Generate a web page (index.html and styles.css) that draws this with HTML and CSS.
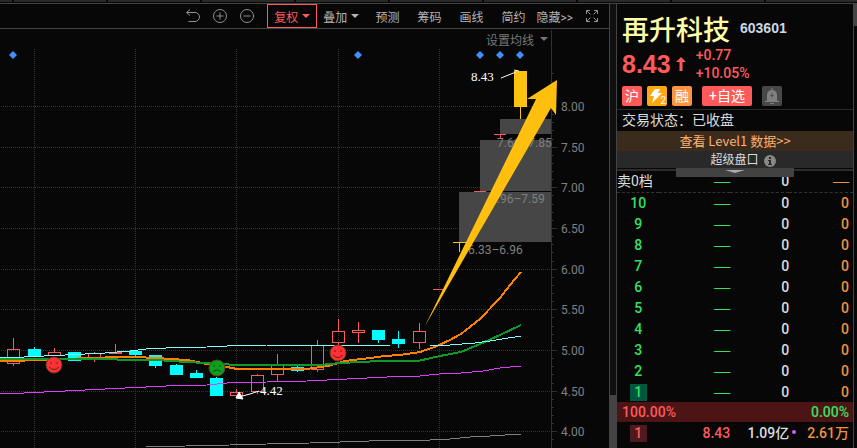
FILE: index.html
```html
<!DOCTYPE html>
<html lang="zh-CN">
  <head>
    <meta charset="UTF-8" />
    <meta name="viewport" content="width=device-width, initial-scale=1.0" />
    <title>再升科技 603601</title>
    <link rel="stylesheet" href="styles.css">
  </head>
  <body>
    <div class="tabs">
      <span></span><span></span><span></span><span></span><span></span>
      <span></span><span></span><span></span><span></span><span></span>
    </div>

    <div class="layout">
      <main class="chart">
        <nav class="toolbar">
          <button class="icon" aria-label="撤销">
            <svg width="16" height="16" viewBox="0 0 16 16"><path d="M5 1.500 1.500 4.500 5 7.500M2 4.500h8a4.500 4.500 0 0 1 0 9H3.500" /></svg>
          </button>
          <button class="icon" aria-label="放大">
            <svg width="16" height="16" viewBox="0 0 16 16"><circle cx="8" cy="8" r="6.500" /><path d="M4.500 8h7M8 4.500v7" /></svg>
          </button>
          <button class="icon" aria-label="缩小">
            <svg width="16" height="16" viewBox="0 0 16 16"><circle cx="8" cy="8" r="6.500" /><path d="M4.500 8h7" /></svg>
          </button>
          <button class="active">复权<i class="caret"></i></button>
          <button class="drop">叠加<i class="caret"></i></button>
          <button>预测</button>
          <button>筹码</button>
          <button>画线</button>
          <button>简约</button>
          <button class="hide">隐藏&gt;&gt;</button>
          <button class="icon full" aria-label="全屏">
            <svg width="12" height="12" viewBox="0 0 12 12"><path d="M.5 4V.5H4M.5.5 4.500 4.500M8 .5h3.500V4M11.500.5l-4 4M.5 8v3.500H4M.5 11.500l4-4M8 11.500h3.500V8M11.500 11.500l-4-4" /></svg>
          </button>
        </nav>

        <div class="plot">
          <button class="ma-setting">设置均线<i class="caret"></i></button>
          <svg class="kline" viewBox="0 29 609 419">
            <!-- grille -->
            <path class="grid" d="M34.500 49V448M135.500 49V448M236.500 49V448M338.500 49V448M439.500 49V448" />
            <g id="axis"></g>
            <path class="axis" d="M551.500 30V448" />

            <g class="gap">
              <rect x="500" y="119" width="51" height="15" />
              <rect x="480" y="140" width="71" height="51" />
              <rect x="459" y="192" width="92" height="50" />
            </g>
            <g class="gap-text">
              <text x="497" y="147">7.66–7.85</text>
              <text x="490" y="203">6.96–7.59</text>
              <text x="468" y="254">6.33–6.96</text>
            </g>

            <g id="candles"></g>

            <g class="limit">
              <path d="M453 242.500h13M459.500 242v10M520.500 106v13" />
              <rect x="514" y="71" width="13" height="36" />
            </g>
            <path class="up" d="M433 289.500h12M474 191.500h12M494 134.500h12M500.500 134v4" />

            <polyline class="ma ma-gray" points="146,447 186,446 230,445 267,444 310,443 340,442 369,441 390,440 430,440 450,439 470,437 490,436 521,434" />
            <polyline class="ma ma-purple" points="0,394 24,393 65,391 105,389 146,387 166,386 207,385 227,383 267,382 307,381 347,379 387,377 420,376 439,374 461,373 483,371 500,368 521,366" />
            <polyline class="ma ma-orange" points="0,361 15,361 35,360 60,359 95,358 115,357 135,357 156,358 187,360 207,364 227,367 237,369 306,369 328,366 345,361 370,358 385,356 400,355 420,352 437,346 450,340 461,334 480,319 500,298 510,285 521,272" />
            <polyline class="ma ma-green" points="0,359 115,359 120,360 156,360 187,362 205,363 237,365 320,365 340,363 380,361 418,361 440,356 461,352 480,344 500,335 521,325" />
            <polyline class="ma ma-cyan" points="0,358 24,357 44,356 65,355 85,354 105,353 130,351 146,349 166,348 207,347 227,346 267,345 340,345 390,346 430,346 450,345 475,343 490,341 502,339 521,336" />

            <g class="face happy">
              <circle cx="54" cy="365" r="8" />
              <path d="M51 362v2M57 362v2M49 367q5 5 10 0" />
              <circle cx="338" cy="353" r="8" />
              <path d="M335 350v2M341 350v2M333 355q5 5 10 0" />
            </g>
            <g class="face sad">
              <circle cx="217" cy="368" r="8" />
              <path d="M214 365v2M220 365v2M213 372q4 -4 8 0" />
            </g>

            <path class="signal" d="M13 51l4 4-4 4-4-4zM358 51l4 4-4 4-4-4zM480 51l4 4-4 4-4-4zM500 51l4 4-4 4-4-4zM520 51l4 4-4 4-4-4z" />

            <g class="mark">
              <text x="471" y="81">8.43</text>
              <path d="M501 78l15-6M514 70l5 1M239 397l11-3 9-3" />
              <path class="head" d="M236 398l3-6 4 7z" />
              <text x="260" y="395">4.42</text>
            </g>

            <path class="arrow" d="M423 327 425 326 536 99 527 99 557 80 556 115 551 108 425 326z" />
          </svg>
        </div>
      </main>

      <div class="scrollbar"><i></i></div>

      <aside class="quote">
        <header>
          <h1>再升科技</h1>
          <span class="code">603601</span>
        </header>
        <div class="price">
          <strong>8.43</strong>
          <svg width="10" height="14" viewBox="0 0 10 14"><path d="M5 0l5 5H6.500v9h-3V5H0z" /></svg>
          <p>+0.77<br>+10.05%</p>
        </div>
        <div class="badges">
          <span class="tag red">沪</span>
          <span class="tag yellow">
            <svg width="20" height="20" viewBox="0 0 20 20"><path d="M8 3h5l-2 4h4L5 17l2-7H3z" /></svg>
            <small>2</small>
          </span>
          <span class="tag orange">融</span>
          <button class="tag add">+自选</button>
          <button class="tag bell" aria-label="预警">
            <svg width="20" height="20" viewBox="0 0 20 20"><path class="rim" d="M10 2v2M3 15.500h14M8 17.500h4" /><path d="M5 15V9a5 5 0 0 1 10 0v6z" /><path class="bolt" d="M11 6l-3 4h2l-1 3 3-4h-2z" /></svg>
          </button>
        </div>

        <p class="status">交易状态：已收盘</p>
        <a class="level" href="#level1">查看 Level1 数据&gt;&gt;</a>
        <div class="super">
          超级盘口
          <svg width="12" height="12" viewBox="0 0 12 12"><circle cx="6" cy="6" r="6" /><path d="M5 2h2v2H5zM4 5h3v4h1v1H4V9h1V6H4z" /></svg>
        </div>
        <div class="splitter"><i></i></div>

        <table class="book">
          <tbody id="book">
            <tr class="total">
              <th>卖0档</th>
              <td class="green dash">—</td>
              <td>0</td>
              <td class="amber dash">—</td>
            </tr>
          </tbody>
        </table>
        <div class="ratio"><span>100.00%</span><span class="green">0.00%</span></div>
        <table class="book">
          <tbody>
            <tr class="buy">
              <th><b>1</b></th>
              <td class="pink">8.43</td>
              <td class="dot">1.09亿</td>
              <td class="amber">2.61万</td>
            </tr>
          </tbody>
        </table>
      </aside>

      <div class="edge"><i></i></div>
    </div>

    <script src="script.js"></script>
  </body>
</html>
```
FILE: styles.css
```css
* {
  box-sizing: border-box;
  margin: 0;
  padding: 0;
}

html,
body {
  height: 100%;
}

body {
  display: flex;
  flex-direction: column;
  overflow: hidden;
  background-color: #070707;
  color: #dcdcdc;
  font-family: Roboto, "Noto Sans CJK SC", sans-serif;
  font-size: 14px;
}

button {
  background: none;
  border: none;
  color: inherit;
  font: inherit;
  cursor: pointer;
}

.tabs {
  display: flex;
  gap: 2px;
  height: 4px;
  overflow: hidden;
  border-bottom: 1px solid #444;
}

.tabs span {
  flex: 0 0 92px;
  height: 2px;
  background-color: #292929;
}

.tabs span:first-child {
  flex-basis: 12px;
}

.layout {
  flex: 1;
  display: flex;
  min-height: 0;
}

.chart {
  flex: 1;
  min-width: 0;
}

/* toolbar */
.toolbar {
  display: flex;
  justify-content: flex-end;
  align-items: center;
  height: 25px;
  padding-right: 11px;
  border-bottom: 1px solid #444;
  color: #b4b4b4;
  font-size: 12px;
}

.toolbar button {
  display: flex;
  align-items: center;
  gap: 4px;
  height: 24px;
  padding: 0 9px;
  white-space: nowrap;
}

.toolbar .icon {
  padding: 0 6px 0 5px;
}

.toolbar .icon svg {
  fill: none;
  stroke: #909090;
}

.toolbar .active {
  margin-left: 6px;
  padding: 0 6px;
  border: 1px solid #ff5a5a;
  color: #ff5a5a;
}

.toolbar .drop {
  padding: 0 7px 0 6px;
}

.toolbar .hide {
  padding: 0 8px 0 2px;
}

.toolbar .full {
  padding-right: 0;
}

.caret {
  border: 4px solid transparent;
  border-top-color: currentColor;
  border-bottom: none;
}

/* chart */
.plot {
  position: relative;
}

.ma-setting {
  position: absolute;
  top: 0;
  right: 61px;
  display: flex;
  align-items: center;
  gap: 6px;
  height: 20px;
  color: #777;
  font-size: 12px;
}

.kline {
  display: block;
  width: 100%;
  font-size: 12px;
}

.grid {
  fill: none;
  stroke: #343434;
  stroke-dasharray: 1 1;
}

.axis {
  fill: none;
  stroke: #303030;
}

.axis-text,
.gap-text {
  fill: #808080;
}

.gap {
  fill: #464646;
}

.up {
  fill: none;
  stroke: #ff5a5a;
}

.down {
  fill: #00ffff;
  stroke: #00ffff;
}

.limit {
  fill: #ffc30f;
}

.limit path {
  stroke: #ffc30f;
}

.ma {
  fill: none;
  shape-rendering: crispEdges;
}

.ma-gray {
  stroke: #808080;
}

.ma-purple {
  stroke: #e03cff;
}

.ma-orange {
  stroke: #ff8000;
  stroke-width: 2;
}

.ma-green {
  stroke: #109828;
  stroke-width: 2;
}

.ma-cyan {
  stroke: #80ffff;
}

.face circle {
  stroke: #6b3a10;
}

.face path {
  fill: none;
  stroke: #6b1a10;
}

.happy circle {
  fill: #ff3038;
}

.sad circle {
  fill: #08a020;
}

.sad path {
  stroke: #104010;
}

.signal {
  fill: #4090ff;
}

.mark {
  fill: #fff;
  font-family: "Liberation Serif", serif;
  font-size: 13px;
}

.mark path {
  fill: none;
  stroke: #fff;
}

.mark .head {
  fill: #fff;
}

.arrow {
  fill: #ffbf0f;
}

/* scrollbars */
.scrollbar {
  display: flex;
  align-items: flex-end;
  width: 8px;
  border-left: 1px solid #444;
  border-right: 1px solid #444;
  background-color: #101010;
}

.scrollbar i {
  width: 100%;
  height: 12%;
  background-color: #444;
}

.edge {
  width: 4px;
  border-left: 1px solid #444;
}

.edge i {
  display: block;
  height: 22px;
  background-color: #444;
}

/* quote panel */
.quote {
  flex: 0 0 236px;
}

.quote header {
  display: flex;
  align-items: center;
  gap: 10px;
  height: 48px;
  padding-left: 5px;
}

h1 {
  color: #ffffa8;
  font-size: 27px;
  font-weight: 500;
}

.code {
  color: #ccd6e4;
  font-family: "Liberation Sans", sans-serif;
  font-weight: bold;
}

.price {
  display: flex;
  align-items: center;
  gap: 5px;
  height: 24px;
  padding-left: 5px;
  color: #ff5a5a;
}

.price strong {
  font-family: "Liberation Sans", sans-serif;
  font-size: 25px;
}

.price svg {
  fill: #ff5a5a;
}

.price p {
  margin-left: 5px;
  font-weight: 500;
  line-height: 18px;
}

.badges {
  display: flex;
  gap: 5px;
  height: 34px;
  padding: 10px 5px 4px;
  border-bottom: 1px solid #292929;
}

.tag {
  position: relative;
  width: 20px;
  height: 20px;
  border-radius: 2px;
  color: #fff;
  line-height: 20px;
  text-align: center;
}

.tag svg {
  display: block;
  fill: #fff;
}

.tag small {
  position: absolute;
  right: 1px;
  bottom: 0;
  font-size: 10px;
  line-height: 10px;
}

.red,
.add {
  background-color: #ff5a5a;
}

.yellow {
  background-color: #ffa80f;
}

.orange {
  background-color: #ff9440;
}

.add {
  width: 50px;
  margin: 0 5px;
}

.bell {
  background-color: #484848;
}

.bell svg {
  fill: #808080;
}

.bell .rim {
  stroke: #808080;
}

.bell .bolt {
  fill: #484848;
}

.status {
  height: 21px;
  padding-left: 5px;
  line-height: 21px;
}

.level {
  display: block;
  height: 20px;
  background-color: #3a2b1d;
  color: #ffb070;
  font-family: "Noto Sans CJK SC", sans-serif;
  font-size: 13px;
  line-height: 20px;
  text-align: center;
  text-decoration: none;
}

.super {
  display: flex;
  align-items: center;
  justify-content: center;
  gap: 5px;
  height: 17px;
  padding: 2px 0 0 16px;
  background-color: #292929;
  font-size: 12px;
  line-height: 17px;
}

.super svg {
  fill: #888;
}

.super path {
  fill: #292929;
}

.splitter {
  position: relative;
  height: 3px;
  border-top: 1px solid #070707;
  background-color: #2c2c2c;
}

.splitter i {
  position: absolute;
  top: -1px;
  left: 25%;
  width: 50%;
  height: 9px;
  background-color: #424242;
}

.splitter i::after {
  content: "";
  position: absolute;
  top: 2px;
  left: 50%;
  margin-left: -10px;
  border: 10px solid transparent;
  border-top: 3px solid #aaa;
  border-bottom: none;
}

.book {
  width: 100%;
  border-collapse: collapse;
  table-layout: fixed;
  font-weight: 500;
}

.book th,
.book td {
  height: 21px;
  line-height: 18px;
}

.book th {
  width: 18%;
  font-weight: 500;
  white-space: nowrap;
}

.book td {
  text-align: right;
}

.book td:nth-child(2) {
  width: 30%;
}

.book td:nth-child(3) {
  width: 25%;
}

.book td:nth-child(4) {
  padding-right: 4px;
}

.book .total th,
.book .total td {
  border-bottom: 1px dashed #333;
}

.book .total th {
  font-weight: 400;
  text-align: left;
}

.book b {
  display: inline-block;
  width: 17px;
  font-weight: 500;
  line-height: 17px;
}

.book .best b {
  background-color: #00563f;
}

.book .buy b {
  background-color: #4d1a1e;
  color: #ff5a5a;
}

.book .dash {
  font-family: "Liberation Serif", serif;
  font-size: 16px;
  font-weight: 400;
}

.green {
  color: #36e060;
}

.amber {
  color: #f09040;
}

.pink {
  color: #ff5a5a;
}

.dot {
  position: relative;
}

.dot::after {
  content: "";
  position: absolute;
  top: 8px;
  right: -7px;
  width: 4px;
  height: 4px;
  border-radius: 50%;
  background-color: #d060ff;
}

.ratio {
  display: flex;
  justify-content: space-between;
  height: 20px;
  padding: 0 4px 0 5px;
  background-color: #4c1414;
  color: #ff5a5a;
  font-weight: 500;
  line-height: 20px;
}

.ratio .green {
  color: #36e060;
}
```
FILE: script.js
```js
// x, wick top, wick bottom, body top, body bottom, direction
const candles = [
  [13, 338, 366, 349, 363, "up"],
  [34, 347, 357, 349, 356, "down"],
  [54, 348, 356, 352, 355, "up"],
  [74, 352, 361, 352, 360, "down"],
  [94, 352, 362, 353, 359, "up"],
  [115, 344, 353, 352, 353, "up"],
  [135, 351, 356, 351, 354, "down"],
  [155, 355, 368, 355, 365, "down"],
  [176, 364, 375, 365, 374, "down"],
  [196, 370, 378, 373, 377, "down"],
  [216, 377, 396, 378, 395, "down"],
  [236, 389, 397, 392, 395, "up"],
  [257, 374, 394, 375, 391, "up"],
  [277, 354, 382, 365, 374, "up"],
  [297, 366, 372, 367, 370, "down"],
  [317, 340, 372, 345, 369, "up"],
  [338, 319, 345, 331, 342, "up"],
  [358, 322, 343, 330, 332, "up"],
  [378, 330, 343, 330, 339, "down"],
  [398, 331, 348, 339, 343, "down"],
  [419, 323, 349, 331, 342, "up"],
];

document.getElementById("candles").innerHTML = candles
  .map(
    ([x, high, low, top, bottom, dir]) => `
    <path class="${dir}" d="M${x + 0.5} ${high}V${top}M${x + 0.5} ${bottom}V${low}" />
    <rect class="${dir}" x="${x - 5.5}" y="${top + 0.5}" width="12" height="${bottom - top}" />`
  )
  .join("");

// price axis
const step = 40.67;
let axis = "";
for (let i = 0; i < 9; i++) {
  const y = Math.round(106 + i * step) + 0.5;
  axis += `<path class="grid" d="M1 ${y}H551" />
    <path class="axis" d="M551 ${y}h6" />
    <text class="axis-text" x="561" y="${y + 4}">${(8 - i * 0.5).toFixed(2)}</text>`;
}
for (let y = 106 - step / 5 * 4; y < 448; y += step / 5) {
  axis += `<path class="axis" d="M551 ${Math.round(y) + 0.5}h3" />`;
}
document.getElementById("axis").innerHTML = axis;

// order book
let rows = "";
for (let level = 10; level > 0; level--) {
  rows += `<tr class="${level === 1 ? "best" : ""}">
    <th class="green"><b>${level}</b></th>
    <td class="green dash">—</td>
    <td>0</td>
    <td class="amber">0</td>
  </tr>`;
}
document.getElementById("book").insertAdjacentHTML("beforeend", rows);
```
